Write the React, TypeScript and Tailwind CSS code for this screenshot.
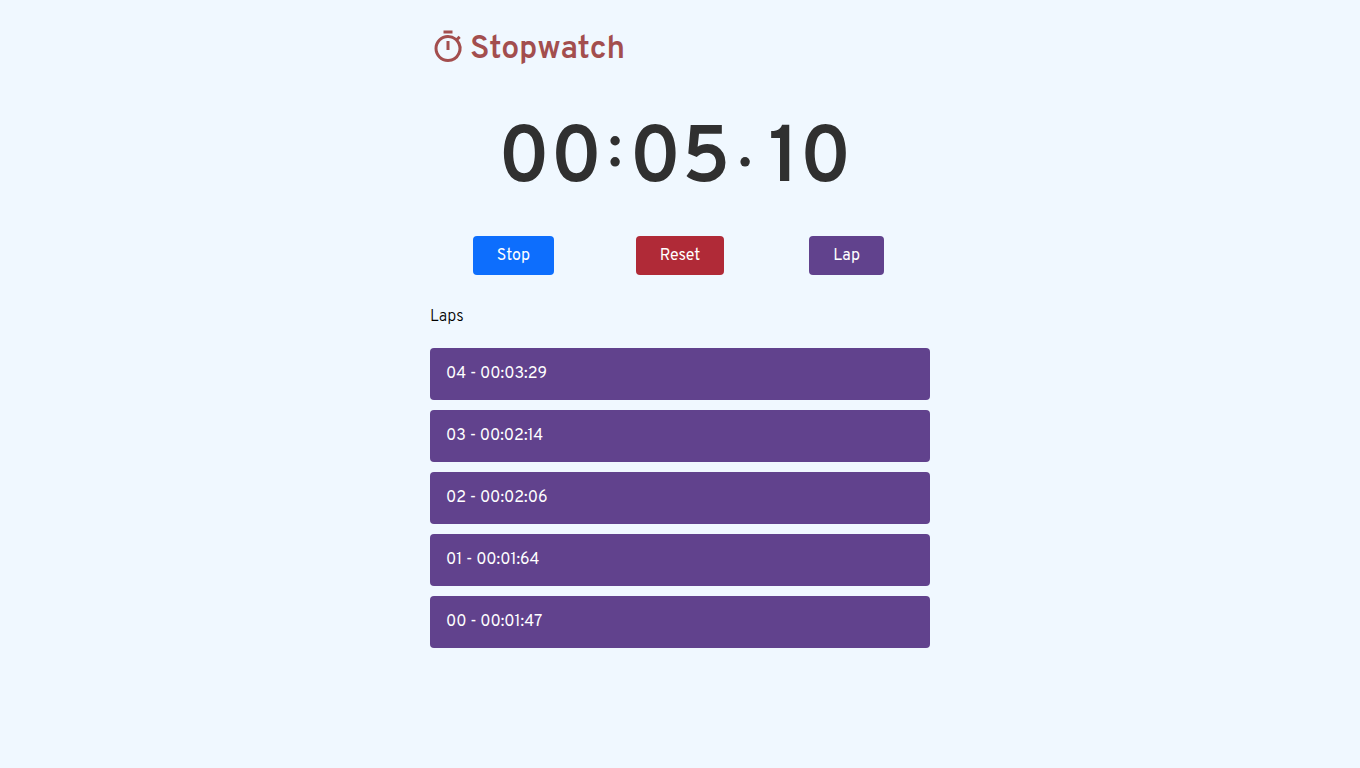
import { useEffect, useState } from "react";
import { MdOutlineTimer } from "react-icons/md";

const initialLaps = [
  "04 - 00:03:29",
  "03 - 00:02:14",
  "02 - 00:02:06",
  "01 - 00:01:64",
  "00 - 00:01:47",
];

const two = (n: number) => String(n).padStart(2, "0");

function parts(cs: number) {
  return [two(Math.floor(cs / 6000)), two(Math.floor(cs / 100) % 60), two(cs % 100)];
}

export default function App() {
  const [time, setTime] = useState(510);
  const [running, setRunning] = useState(false);
  const [laps, setLaps] = useState(initialLaps);

  useEffect(() => {
    if (!running) return;
    const id = setInterval(() => setTime((t) => t + 1), 10);
    return () => clearInterval(id);
  }, [running]);

  const [min, sec, cs] = parts(time);

  return (
    <div className="min-h-screen bg-[#f0f8ff] font-['Overpass','Noto_Sans',sans-serif] text-base text-[#212529]">
      <main className="mx-auto max-w-[500px] pt-[23px] pb-8">
        <h1 className="flex h-12 items-center gap-1 text-[32px] text-[#a34e4e]">
          <MdOutlineTimer className="size-9" aria-hidden="true" />
          <span className="pt-1.5 font-semibold">Stopwatch</span>
        </h1>
        <div className="mt-[34px] flex h-28 items-center justify-center text-[80px] leading-none font-semibold text-[#303030]" role="timer">
          <span className="w-[104px] text-center">{min}</span>
          <span className="w-[26px] pb-5 text-center text-[60px]">:</span>
          <span className="w-[104px] text-center">{sec}</span>
          <span className="w-[26px] pb-5 text-center text-[60px]">.</span>
          <span className="w-[104px] text-center">{cs}</span>
        </div>
        <div className="mt-[19px] grid grid-cols-3 justify-items-center">
          <button type="button" className="h-[39px] rounded-[4px] bg-[#0d6efd] px-6 text-white" onClick={() => setRunning(!running)}>
            Stop
          </button>
          <button type="button" className="h-[39px] rounded-[4px] bg-[#b02a37] px-6 text-white" onClick={() => { setTime(0); setRunning(false); setLaps([]); }}>
            Reset
          </button>
          <button type="button" className="h-[39px] rounded-[4px] bg-[#61428d] px-6 text-white" onClick={() => setLaps([`${two(laps.length)} - ${parts(time).join(":")}`, ...laps])}>
            Lap
          </button>
        </div>
        <h2 className="mt-[30px] leading-6 font-light text-black">Laps</h2>
        <ul className="mt-[19px] flex flex-col gap-[10px]">
          {laps.map((lap) => (
            <li key={lap} className="flex h-[52px] items-center rounded-[4px] bg-[#61428d] px-4 text-white">
              {lap}
            </li>
          ))}
        </ul>
      </main>
    </div>
  );
}
